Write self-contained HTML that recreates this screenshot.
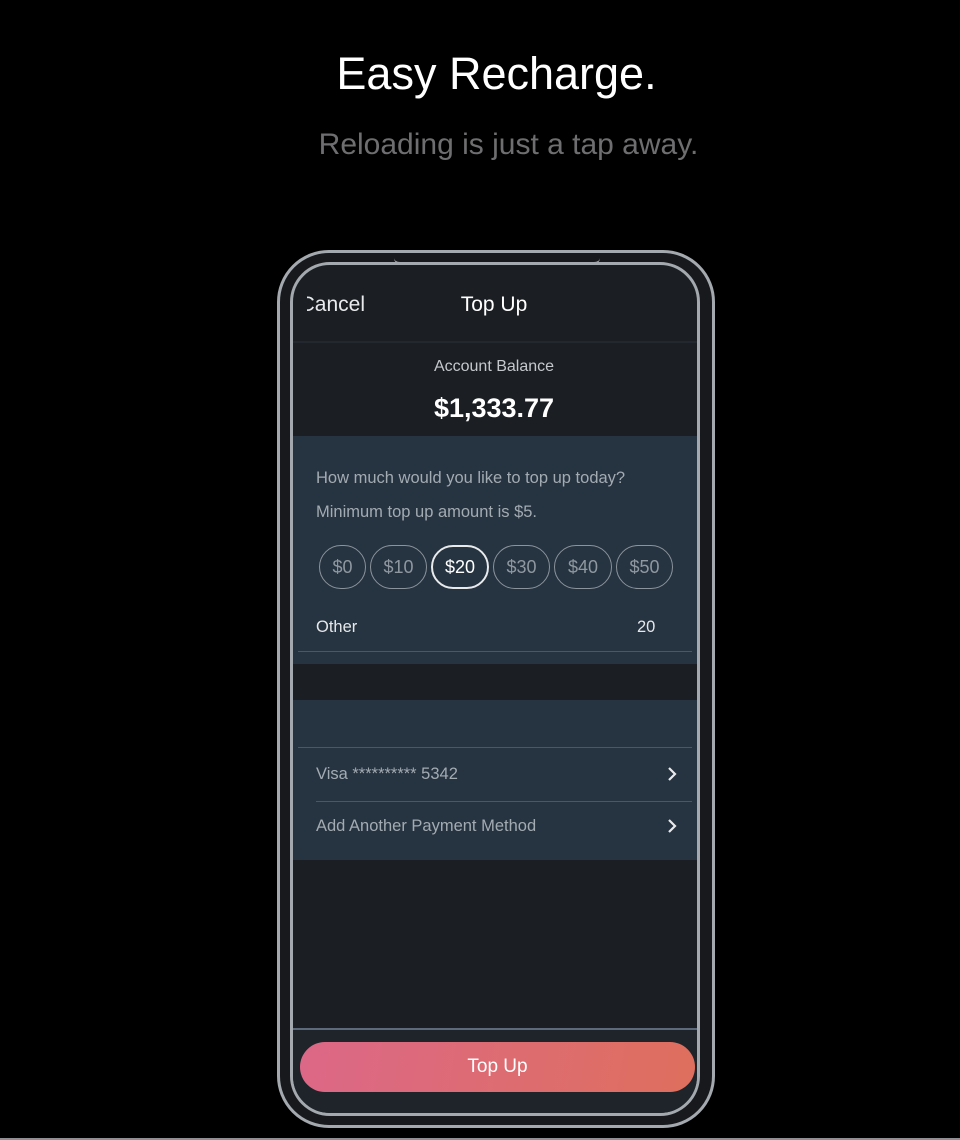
<!DOCTYPE html>
<html><head><meta charset="utf-8"><style>
*{margin:0;padding:0;box-sizing:border-box}
body{width:960px;height:1140px;background:#000;position:relative;overflow:hidden;font-family:"Liberation Sans",sans-serif}
.a{position:absolute}
.t{white-space:nowrap}
.btn{position:absolute;top:545px;height:44px;border:1px solid #8a949c;border-radius:22px;color:#8f98a0;font-size:18px;display:flex;align-items:center;justify-content:center}
</style></head><body>
<div class="a t" style="left:0;width:993px;top:48px;text-align:center;color:#fff;font-size:45px">Easy Recharge.</div>
<div class="a t" style="left:0;width:1017px;top:128px;text-align:center;color:#6e6e70;font-size:30px">Reloading is just a tap away.</div>

<div class="a" style="left:277px;top:250px;width:438px;height:878px;border:3px solid #a3a9ae;border-radius:52px;background:#17191c"></div>
<div class="a" style="left:290px;top:262px;width:410px;height:854px;border:3px solid #a3a9ae;border-radius:40px;background:#1b1f24;overflow:hidden">
  <div class="a" style="left:0;top:76px;width:100%;height:2px;background:#23282e"></div>
  <div class="a" style="left:14px;width:58px;top:28px;height:30px;overflow:hidden">
    <div class="a t" style="right:0;top:0;color:#e8eaec;font-size:21px">Cancel</div>
  </div>
  <div class="a t" style="left:0;width:100%;top:28px;text-align:center;color:#fff;font-size:21px;padding-right:2px">Top Up</div>
  <div class="a t" style="left:0;width:100%;top:93px;text-align:center;color:#c5c9cd;font-size:16px;padding-right:2px">Account Balance</div>
  <div class="a t" style="left:0;width:100%;top:128px;text-align:center;color:#fff;font-size:27px;font-weight:bold;padding-right:2px">$1,333.77</div>
  <div class="a" style="left:0;top:171px;width:100%;height:228px;background:#263340"></div>
  <div class="a t" style="left:23px;top:204px;color:#a3abb2;font-size:16.5px">How much would you like to top up today?</div>
  <div class="a t" style="left:23px;top:238px;color:#a3abb2;font-size:16.5px">Minimum top up amount is $5.</div>
  <div class="a t" style="left:23px;top:353px;color:#e5e8ea;font-size:16.5px">Other</div>
  <div class="a t" style="left:344px;top:353px;color:#e5e8ea;font-size:16.5px">20</div>
  <div class="a" style="left:5px;top:386px;width:394px;height:1px;background:#4b5864"></div>
  <div class="a" style="left:0;top:435px;width:100%;height:160px;background:#263340"></div>
  <div class="a" style="left:5px;top:482px;width:394px;height:1px;background:#4b5864"></div>
  <div class="a t" style="left:23px;top:500px;color:#a3abb2;font-size:16.5px">Visa ********** 5342</div>
  <div class="a" style="left:23px;top:536px;width:376px;height:1px;background:#4b5864"></div>
  <div class="a t" style="left:23px;top:552px;color:#a3abb2;font-size:16.5px">Add Another Payment Method</div>
  <svg class="a" style="left:372px;top:501px" width="14" height="16"><path d="M4 2l6 6-6 6" stroke="#e8eaec" stroke-width="2.2" fill="none"/></svg>
  <svg class="a" style="left:372px;top:553px" width="14" height="16"><path d="M4 2l6 6-6 6" stroke="#e8eaec" stroke-width="2.2" fill="none"/></svg>
  <div class="a" style="left:0;top:763px;width:100%;height:2px;background:#5c6a7c"></div>
  <div class="a" style="left:0;top:765px;width:100%;height:100px;background:#1f232a"></div>
</div>
<div class="a" style="left:394px;top:258px;width:206px;height:6px;border-bottom:2px solid #a3a9ae;border-radius:0 0 8px 8px;background:#17191c"></div>
<div class="btn" style="left:319px;width:47px">$0</div>
<div class="btn" style="left:370px;width:57px">$10</div>
<div class="btn" style="left:431px;width:58px;border:2px solid #e8eaec;color:#fff">$20</div>
<div class="btn" style="left:493px;width:57px">$30</div>
<div class="btn" style="left:554px;width:58px">$40</div>
<div class="btn" style="left:616px;width:57px">$50</div>
<div class="a" style="left:300px;top:1042px;width:395px;height:50px;border-radius:25px;background:linear-gradient(100deg,#dc6888,#de6f5d);color:#fff;font-size:19px;display:flex;align-items:center;justify-content:center">Top Up</div>
<div class="a" style="left:0;top:1138px;width:960px;height:2px;background:#8d8f92"></div>
</body></html>
